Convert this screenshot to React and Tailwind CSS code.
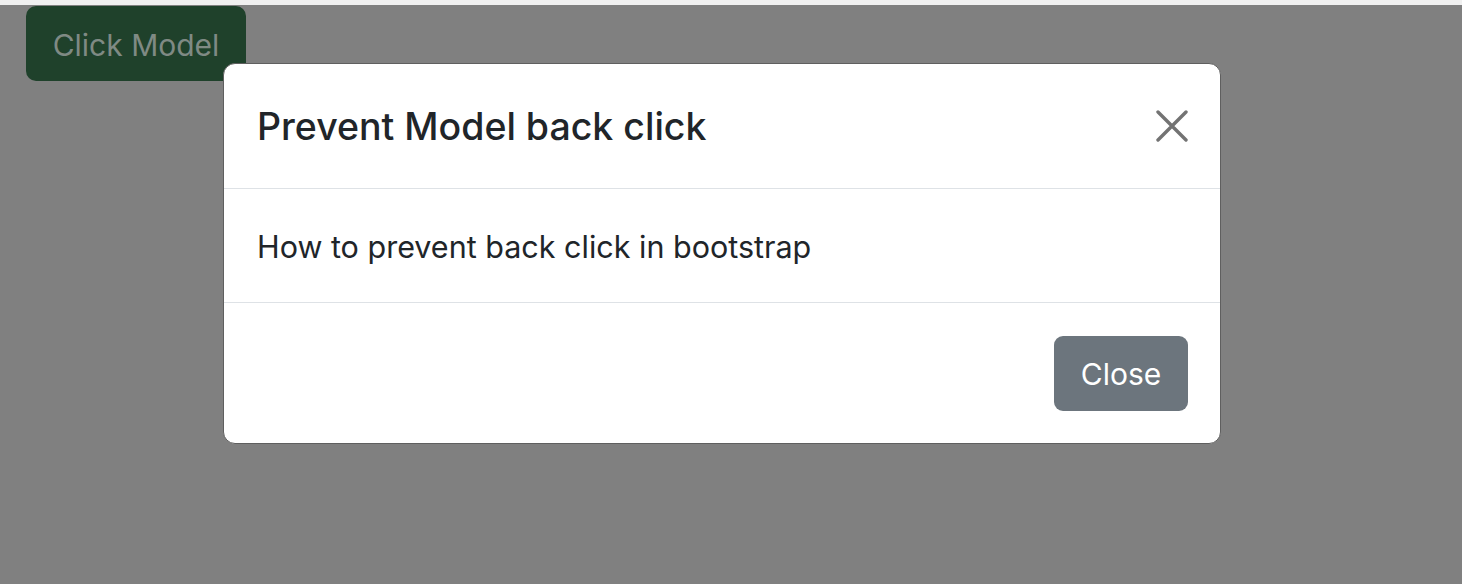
export default function App() {
  return (
    <div className="relative h-[584px] w-[1462px] overflow-hidden bg-[#808080] font-['Inter','Liberation_Sans',sans-serif]">
      <div className="h-[5px] bg-[#f0f0f0]" />
      <div className="pl-[26px] pt-[1px]">
        <button className="flex h-[75px] w-[220px] items-center justify-center rounded-[10px] bg-[#1f412b] pt-[3px] text-[30px] text-[#7f8a84]">
          Click Model
        </button>
      </div>

      <div className="absolute left-[223px] top-[63px] w-[998px] rounded-[12px] border border-[#5f5f5f] bg-white">
        <div className="flex h-[125px] items-center justify-between border-b border-[#dee2e6] pl-[33px] pr-[32px]">
          <h5 className="pt-[2px] text-[37.5px] font-medium text-[#212529]">Prevent Model back click</h5>
          <button className="flex h-[32px] w-[32px] items-center justify-center text-[#737373]">
            <svg width="32" height="32" viewBox="0 0 32 32" fill="none" stroke="currentColor" strokeWidth="3.4" strokeLinecap="round">
              <path d="M2 2L30 30M30 2L2 30" />
            </svg>
          </button>
        </div>
        <div className="flex h-[114px] items-center border-b border-[#dee2e6] px-[33px]">
          <p className="pt-[2px] text-[30.5px] text-[#212529]">How to prevent back click in bootstrap</p>
        </div>
        <div className="flex h-[140px] items-center justify-end px-[32px]">
          <button className="h-[75px] w-[134px] rounded-[9px] bg-[#6c757d] pt-[3px] text-[30px] text-white">Close</button>
        </div>
      </div>
    </div>
  );
}
